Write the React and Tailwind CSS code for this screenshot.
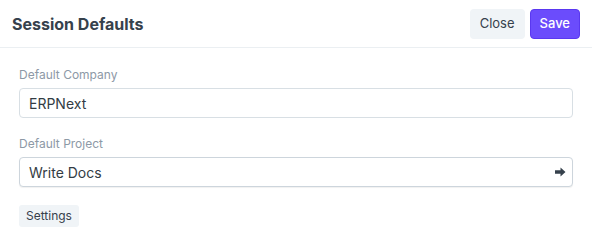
import React from 'react';

const Field = ({ label, value, focused }) => (
  <div className="flex flex-col">
    <label className="text-[12px] leading-4 text-[#8d99a6] mb-[5px]">{label}</label>
    <div
      className={`h-[30px] flex items-center justify-between rounded-[4px] border bg-white pl-[9px] pr-[6px] ${
        focused ? 'border-[#cdd5dc] shadow-[0_1px_1px_rgba(0,0,0,0.06)]' : 'border-[#d8dfe4]'
      }`}
    >
      <span className="text-[14px] text-[#333c44]">{value}</span>
      {focused && (
        <svg width="11" height="10" viewBox="0 0 11 10" className="text-[#36414c]">
          <path d="M0 3.2h5.5V0.5L10.5 5L5.5 9.5V6.8H0z" fill="currentColor" />
        </svg>
      )}
    </div>
  </div>
);

const App = () => {
  return (
    <div className="w-[592px] h-[250px] bg-white font-['Inter',sans-serif]">
      <div className="h-[48px] flex items-center justify-between pl-[12px] pr-[12px] border-b border-[#ebeff2]">
        <h2 className="text-[16px] font-bold text-[#36414c]">Session Defaults</h2>
        <div className="flex items-center gap-[5px]">
          <button className="h-[30px] px-[10px] rounded-[4px] bg-[#f0f4f7] text-[13px] text-[#36414c]">
            Close
          </button>
          <button className="h-[30px] px-[9px] rounded-[4px] bg-[#6b4cfc] border border-[#5a38f0] text-[13px] font-medium text-white">
            Save
          </button>
        </div>
      </div>

      <div className="px-[19px] pt-[19px] flex flex-col gap-[18px]">
        <Field label="Default Company" value="ERPNext" />
        <Field label="Default Project" value="Write Docs" focused />
      </div>
      <div className="px-[19px] pt-[15px]">
        <button className="h-[22px] px-[7px] rounded-[3px] bg-[#f0f4f7] text-[12px] text-[#36414c]">
          Settings
        </button>
      </div>
    </div>
  );
};

export default App;
